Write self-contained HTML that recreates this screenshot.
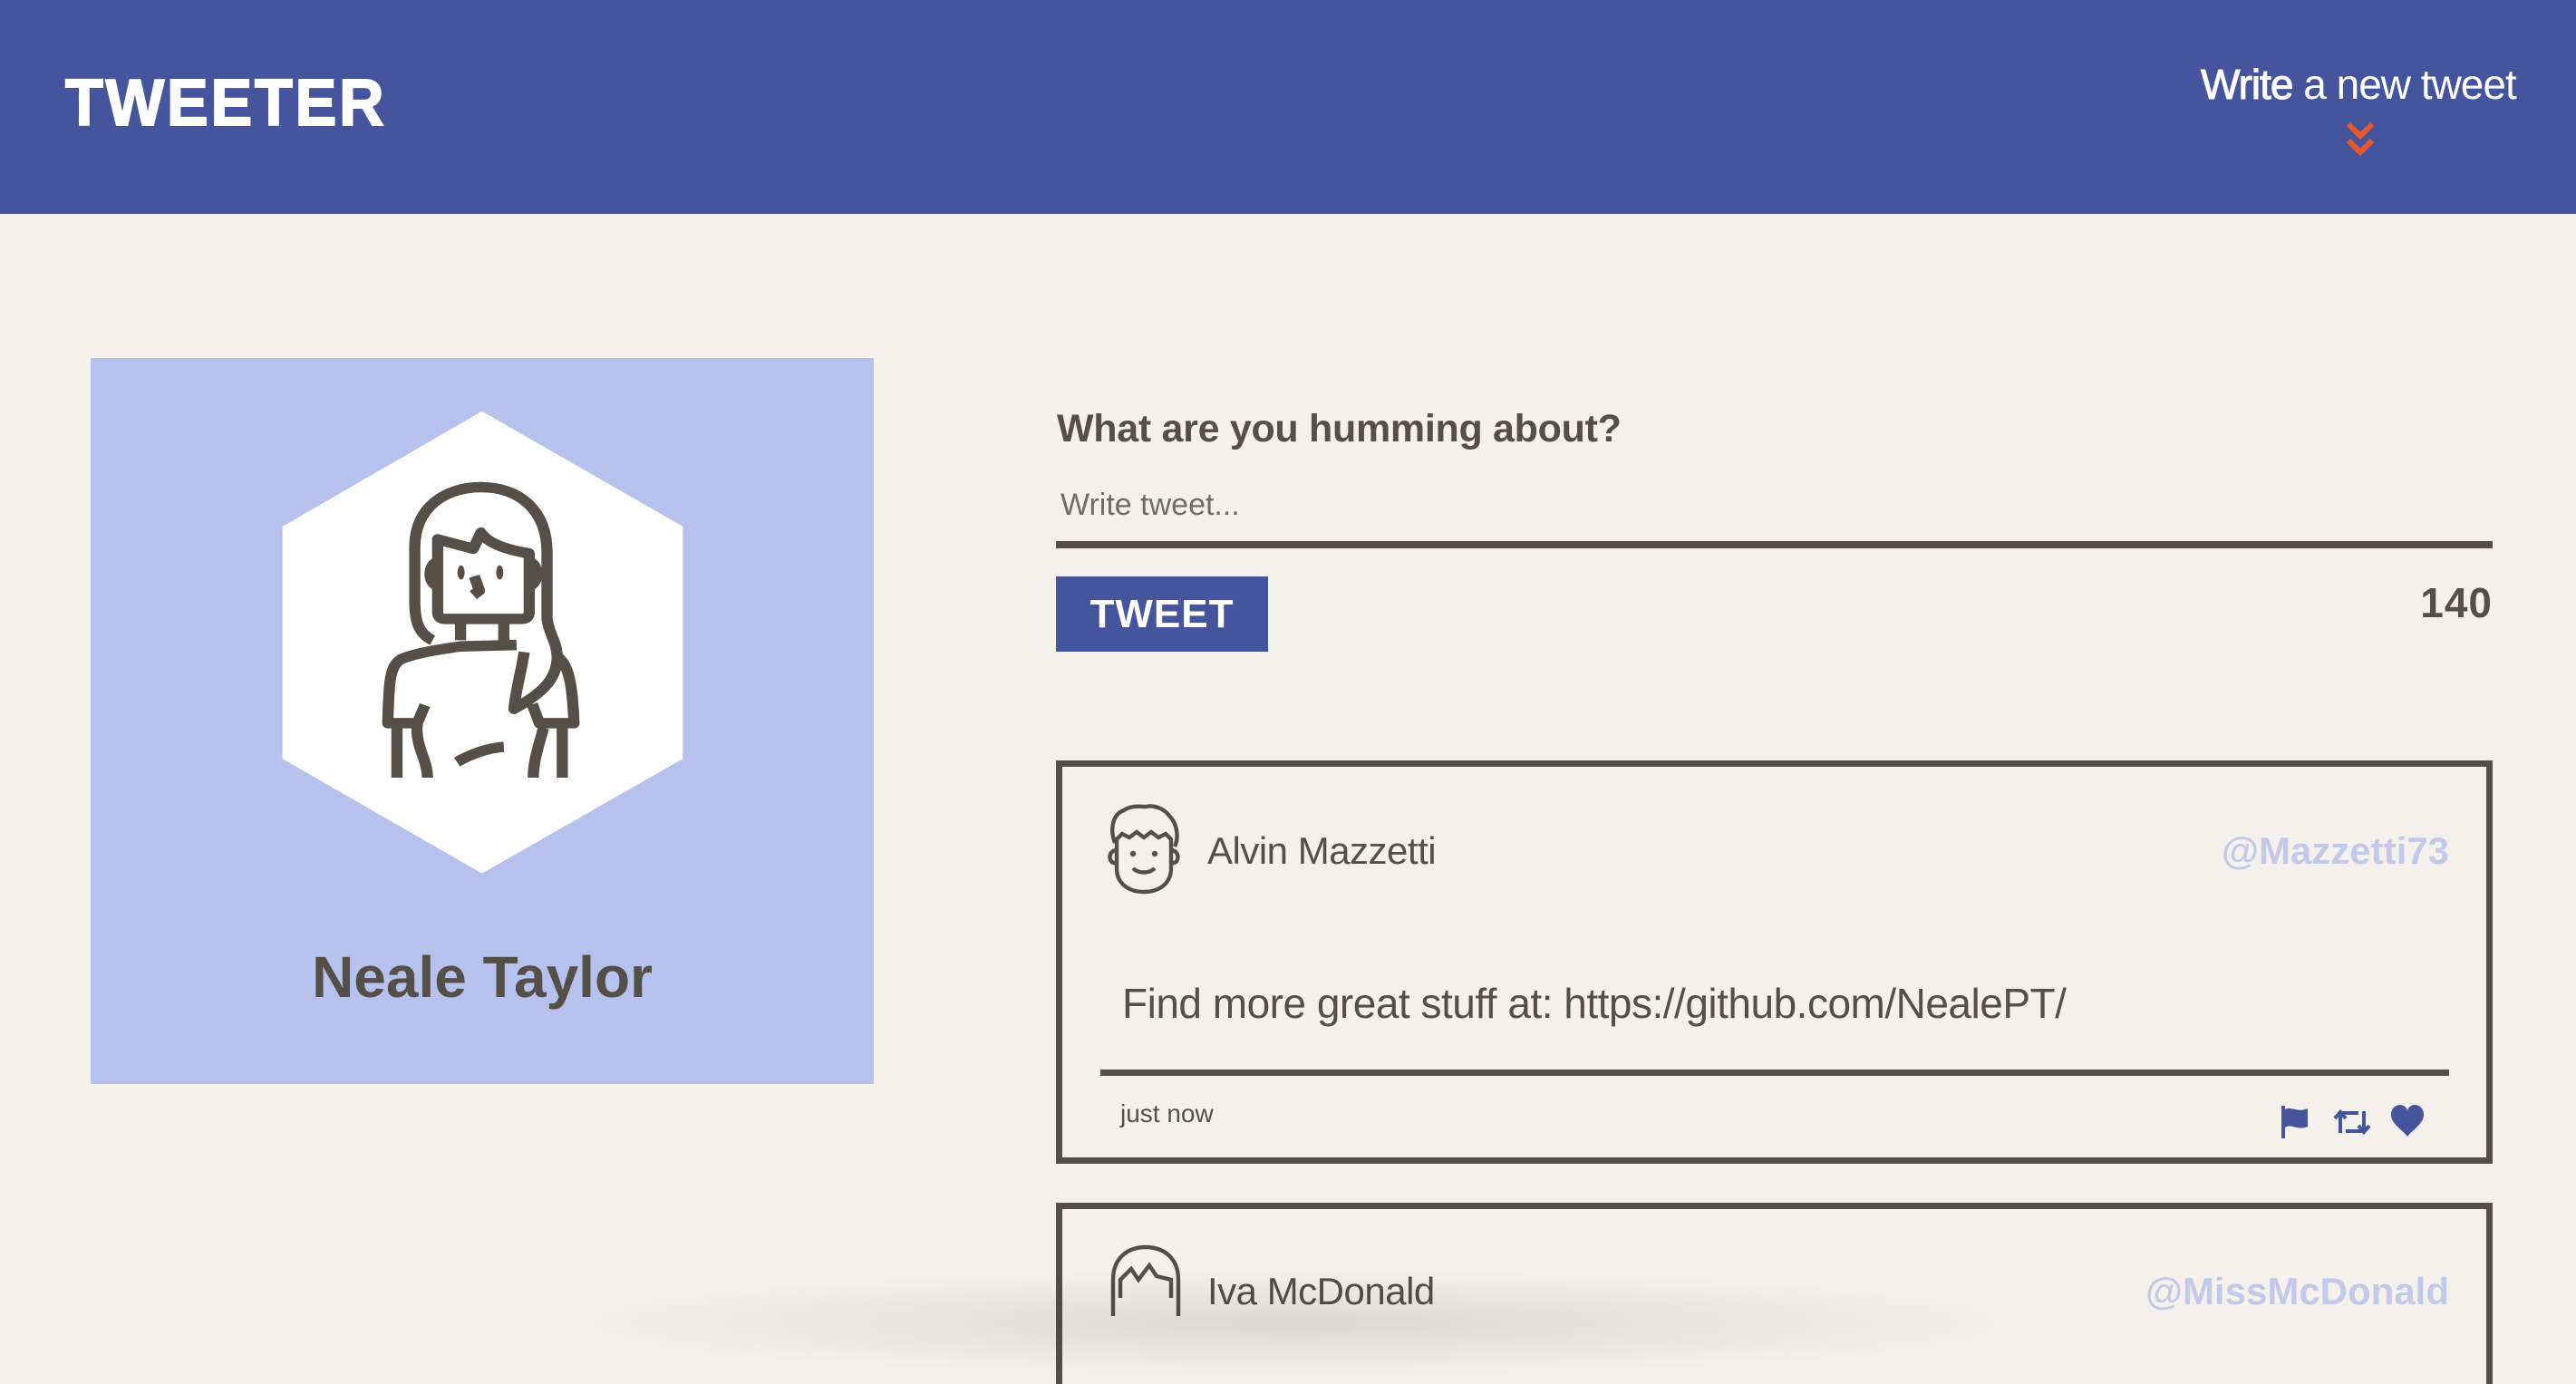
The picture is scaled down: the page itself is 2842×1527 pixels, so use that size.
<!DOCTYPE html>
<html><head><meta charset="utf-8"><style>
*{margin:0;padding:0;box-sizing:border-box}
body{width:2842px;height:1448px;overflow:hidden;background:#f4f1ec;font-family:"Liberation Sans",sans-serif;color:#545049;position:relative}
.a{position:absolute;white-space:nowrap}
.hdr{left:0;top:0;width:2842px;height:236px;background:#45559d}
.logo{left:72px;top:78px;font-size:72px;font-weight:bold;color:#fff;letter-spacing:3px;transform:scaleX(0.95);transform-origin:left;line-height:1;-webkit-text-stroke:2px #fff}
.blk{font-weight:bold;letter-spacing:1px}
</style></head><body>
<div class="a hdr"></div>
<div class="a logo">TWEETER</div>
<div class="a" style="left:2428px;top:70px;font-size:46px;color:#fff;line-height:1;letter-spacing:-1px"><b style="font-weight:normal;-webkit-text-stroke:1px #fff">Write</b> a new tweet</div>
<svg class="a" style="left:2588px;top:134px" width="32" height="40" viewBox="0 0 32 40"><path d="M3 3 L16 16 L29 3 M3 21 L16 34 L29 21" stroke="#e8582a" stroke-width="6" fill="none"/></svg>

<div class="a" style="left:100px;top:395px;width:864px;height:801px;background:#b6c1ed"></div>
<svg class="a" style="left:90px;top:390px" width="880" height="820" viewBox="0 0 1568 1568" preserveAspectRatio="none">
<polygon points="787,122 1182,365 1182,855 787,1097 395,855 395,365" fill="#fff"/>
<g fill="none" stroke="#545049" stroke-width="22" stroke-linejoin="round">
<path d="M690,605 C660,590 655,560 655,520 L655,410 C655,320 720,282 785,282 C860,282 915,330 915,420 L915,560 C918,590 935,610 935,640 C935,690 900,720 850,750 C855,700 865,670 870,630"/>
<path d="M700,392 L770,412 L785,378 C800,402 840,415 880,422 L880,545 Q880,560 865,560 L715,560 Q700,560 700,545 Z"/>
<path d="M700,440 C680,445 680,485 700,490 M880,440 C900,445 900,485 880,490"/>
<path d="M772,470 L782,500 L770,510"/>
<path d="M745,560 L745,605 M830,560 L830,612"/>
<path d="M855,615 L745,618 C700,625 655,632 628,645 C606,660 604,690 602,780 L660,780 L675,742"/>
<path d="M620,780 L620,895 M660,780 C655,830 680,855 680,895"/>
<path d="M935,640 C958,655 965,700 968,780 L900,780 L886,740"/>
<path d="M945,780 L945,895 M908,790 C898,830 888,860 888,895"/>
<path d="M738,862 C765,845 800,832 830,830"/>
</g>
<ellipse cx="746" cy="462" rx="7" ry="15" fill="#545049"/><ellipse cx="822" cy="462" rx="7" ry="15" fill="#545049"/>
</svg>
<div class="a" style="left:100px;top:1046px;width:864px;text-align:center;font-size:64px;font-weight:bold;line-height:1">Neale Taylor</div>

<div class="a" style="left:1166px;top:452px;font-size:43px;font-weight:bold;line-height:1;letter-spacing:-0.3px">What are you humming about?</div>
<div class="a" style="left:1170px;top:540px;font-size:34px;color:#706c66;line-height:1">Write tweet...</div>
<div class="a" style="left:1165px;top:597px;width:1585px;height:8px;background:#545049"></div>
<div class="a" style="left:1165px;top:636px;width:234px;height:83px;background:#45559d;color:#fff;font-size:44px;text-align:center;line-height:83px"><span class="blk">TWEET</span></div>
<div class="a blk" style="left:2640px;top:642px;width:110px;text-align:right;font-size:46px;line-height:1">140</div>

<div class="a" style="left:1165px;top:839px;width:1585px;height:445px;border:7px solid #545049"></div>
<svg class="a" style="left:1212px;top:886px" width="100" height="104" viewBox="0 0 50 52"><g fill="none" stroke="#545049" stroke-width="2.2"><path d="M9 22 C6 14 8 6 14 4 C18 1 24 2 26 2 C31 1 36 3 39 7 C44 12 44 20 42 24"/><path d="M10 20 L10 36 C10 44 16 49 25 49 C34 49 40 44 40 36 L40 20 L37 17 L33 19 L29 16 L25 19 L21 16 L17 19 L13 17 Z"/><path d="M10 26 C5 26 5 34 10 33 M40 26 C45 26 45 34 40 33"/><path d="M19 36 C22 39 28 39 31 36"/></g><circle cx="19" cy="28" r="1.6" fill="#545049"/><circle cx="31" cy="28" r="1.6" fill="#545049"/></svg>
<div class="a" style="left:1332px;top:918px;font-size:42px;line-height:1;font-weight:300;letter-spacing:-0.5px">Alvin Mazzetti</div>
<div class="a" style="left:2400px;top:918px;width:302px;text-align:right;font-size:42px;line-height:1;color:#c4c9ea;font-weight:bold">@Mazzetti73</div>
<div class="a" style="left:1238px;top:1084px;font-size:46px;line-height:1;letter-spacing:-0.5px">Find more great stuff at: https://github.com/NealePT/</div>
<div class="a" style="left:1214px;top:1180px;width:1488px;height:7px;background:#545049"></div>
<div class="a" style="left:1236px;top:1215px;font-size:28px;line-height:1">just now</div>
<svg class="a" style="left:2514px;top:1218px" width="38" height="40" viewBox="0 0 38 40"><path d="M3 2 L7 2 L7 38 L3 38 Z M7 6 C14 2 20 10 32 5 L32 25 C20 30 14 21 7 26 Z" fill="#45559d"/></svg>
<svg class="a" style="left:2574px;top:1220px" width="42" height="36" viewBox="0 0 42 36"><g fill="none" stroke="#45559d" stroke-width="4"><path d="M8 30 L8 8 L28 8 M2 14 L8 7 L14 14 M34 6 L34 28 L14 28 M28 22 L34 29 L40 22"/></g></svg>
<svg class="a" style="left:2636px;top:1218px" width="40" height="38" viewBox="0 0 40 38"><path d="M20 36 C14 28 2 22 2 12 C2 4 8 1 12 1 C16 1 19 4 20 7 C21 4 24 1 28 1 C32 1 38 4 38 12 C38 22 26 28 20 36 Z" fill="#45559d"/></svg>

<div class="a" style="left:1165px;top:1327px;width:1585px;height:200px;border:7px solid #545049;border-bottom:none"></div>
<svg class="a" style="left:1216px;top:1372px" width="96" height="80" viewBox="0 0 48 40"><g fill="none" stroke="#545049" stroke-width="2.2"><path d="M6 40 L6 20 C6 8 14 2 24 2 C34 2 42 8 42 20 L42 40"/><path d="M10 30 L10 20 L16 14 L20 20 L26 12 L30 18 L38 20 L38 30"/></g></svg>
<div class="a" style="left:1332px;top:1404px;font-size:42px;line-height:1;font-weight:300;letter-spacing:-0.5px">Iva McDonald</div>
<div class="a" style="left:2300px;top:1404px;width:402px;text-align:right;font-size:42px;line-height:1;color:#c4c9ea;font-weight:bold">@MissMcDonald</div>
<div class="a" style="left:600px;top:1400px;width:1660px;height:120px;border-radius:50%;background:radial-gradient(ellipse at center,rgba(0,0,0,0.10),rgba(0,0,0,0) 70%)"></div>
</body></html>
